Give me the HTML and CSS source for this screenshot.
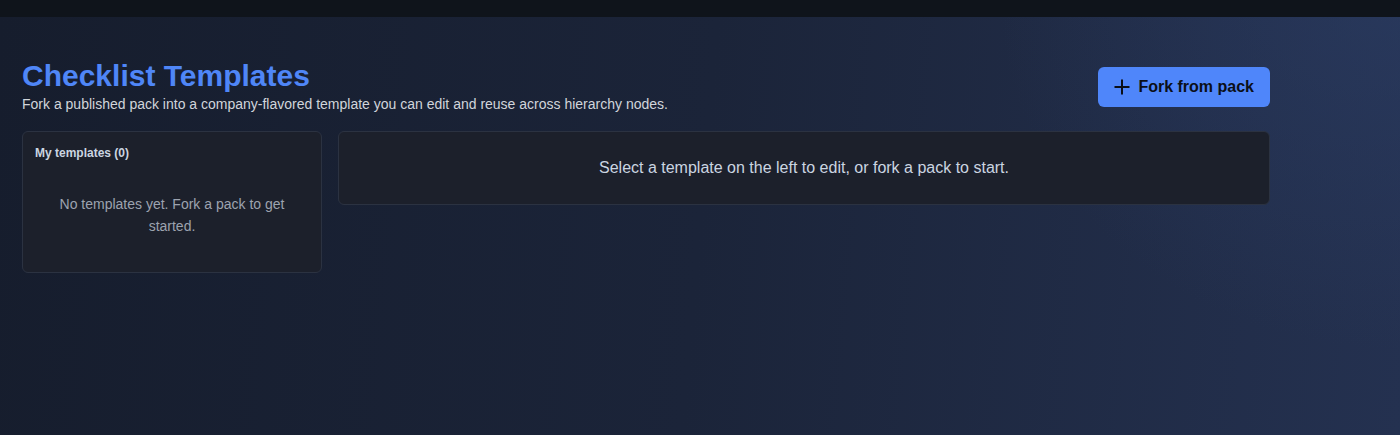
FILE: index.html
```html
<!DOCTYPE html>
<html lang="en">
<head>
<meta charset="utf-8">
<title>Checklist Templates</title>
<link rel="stylesheet" href="styles.css">
</head>
<body>
<div class="topbar"></div>
<main class="page">
  <header class="page-header">
    <div class="titles">
      <h1 class="title">Checklist Templates</h1>
      <p class="subtitle">Fork a published pack into a company-flavored template you can edit and reuse across hierarchy nodes.</p>
    </div>
    <button class="btn-primary" type="button">
      <svg class="btn-icon" width="16" height="16" viewBox="0 0 16 16" aria-hidden="true"><path d="M8 0.5v15M0.5 8h15" stroke="#0b0f17" stroke-width="2" fill="none"/></svg>
      <span>Fork from pack</span>
    </button>
  </header>
  <section class="layout">
    <aside class="card side">
      <h2 class="side-title">My templates (0)</h2>
      <p class="empty">No templates yet. Fork a pack to get started.</p>
    </aside>
    <div class="card detail">
      <p class="detail-text">Select a template on the left to edit, or fork a pack to start.</p>
    </div>
  </section>
</main>
</body>
</html>
```

FILE: styles.css
```css
* { box-sizing: border-box; }
html, body { margin: 0; height: 100%; }
body {
  font-family: "Liberation Sans", Arial, sans-serif;
  color: #d1d5db;
  background:
    radial-gradient(ellipse 400px 350px at 100% 0%, rgba(44, 62, 102, 0.55) 0%, rgba(44, 62, 102, 0) 100%),
    linear-gradient(95deg, #161d2d 0%, #1b2439 50%, #243150 100%);
  min-height: 435px;
  overflow: hidden;
}
.topbar {
  height: 17px;
  background: #0f141b;
}
.page {
  width: 1248px;
  margin-left: 22px;
  padding-top: 42px;
}
.page-header {
  display: flex;
  justify-content: space-between;
  align-items: flex-start;
}
.title {
  margin: 0;
  font-size: 30px;
  line-height: 34px;
  font-weight: 700;
  color: #4f86f7;
}
.subtitle {
  margin: 2px 0 0;
  font-size: 14px;
  line-height: 18px;
  color: #d1d5db;
}
.btn-primary {
  margin-top: 8px;
  height: 40px;
  display: flex;
  align-items: center;
  gap: 8px;
  border: none;
  border-radius: 6px;
  background: #4f86fa;
  color: #0b0f17;
  font-family: inherit;
  font-size: 16px;
  font-weight: 700;
  padding: 0 16px;
  white-space: nowrap;
}
.btn-icon { flex: none; }
.layout {
  display: grid;
  grid-template-columns: 300px 1fr;
  gap: 16px;
  margin-top: 18px;
  align-items: start;
}
.card {
  background: #1c202b;
  border: 1px solid #2b3241;
  border-radius: 6px;
}
.side {
  height: 142px;
  padding: 14px 12px;
}
.side-title {
  margin: 0;
  font-size: 12px;
  line-height: 15px;
  font-weight: 700;
  color: #cbd5e1;
}
.empty {
  margin: 32px 16px 0;
  text-align: center;
  font-size: 14px;
  line-height: 22px;
  color: #9ca3af;
}
.detail {
  height: 74px;
  display: flex;
  align-items: center;
  justify-content: center;
}
.detail-text {
  margin: 0;
  font-size: 16px;
  color: #cbd5e1;
}
```
